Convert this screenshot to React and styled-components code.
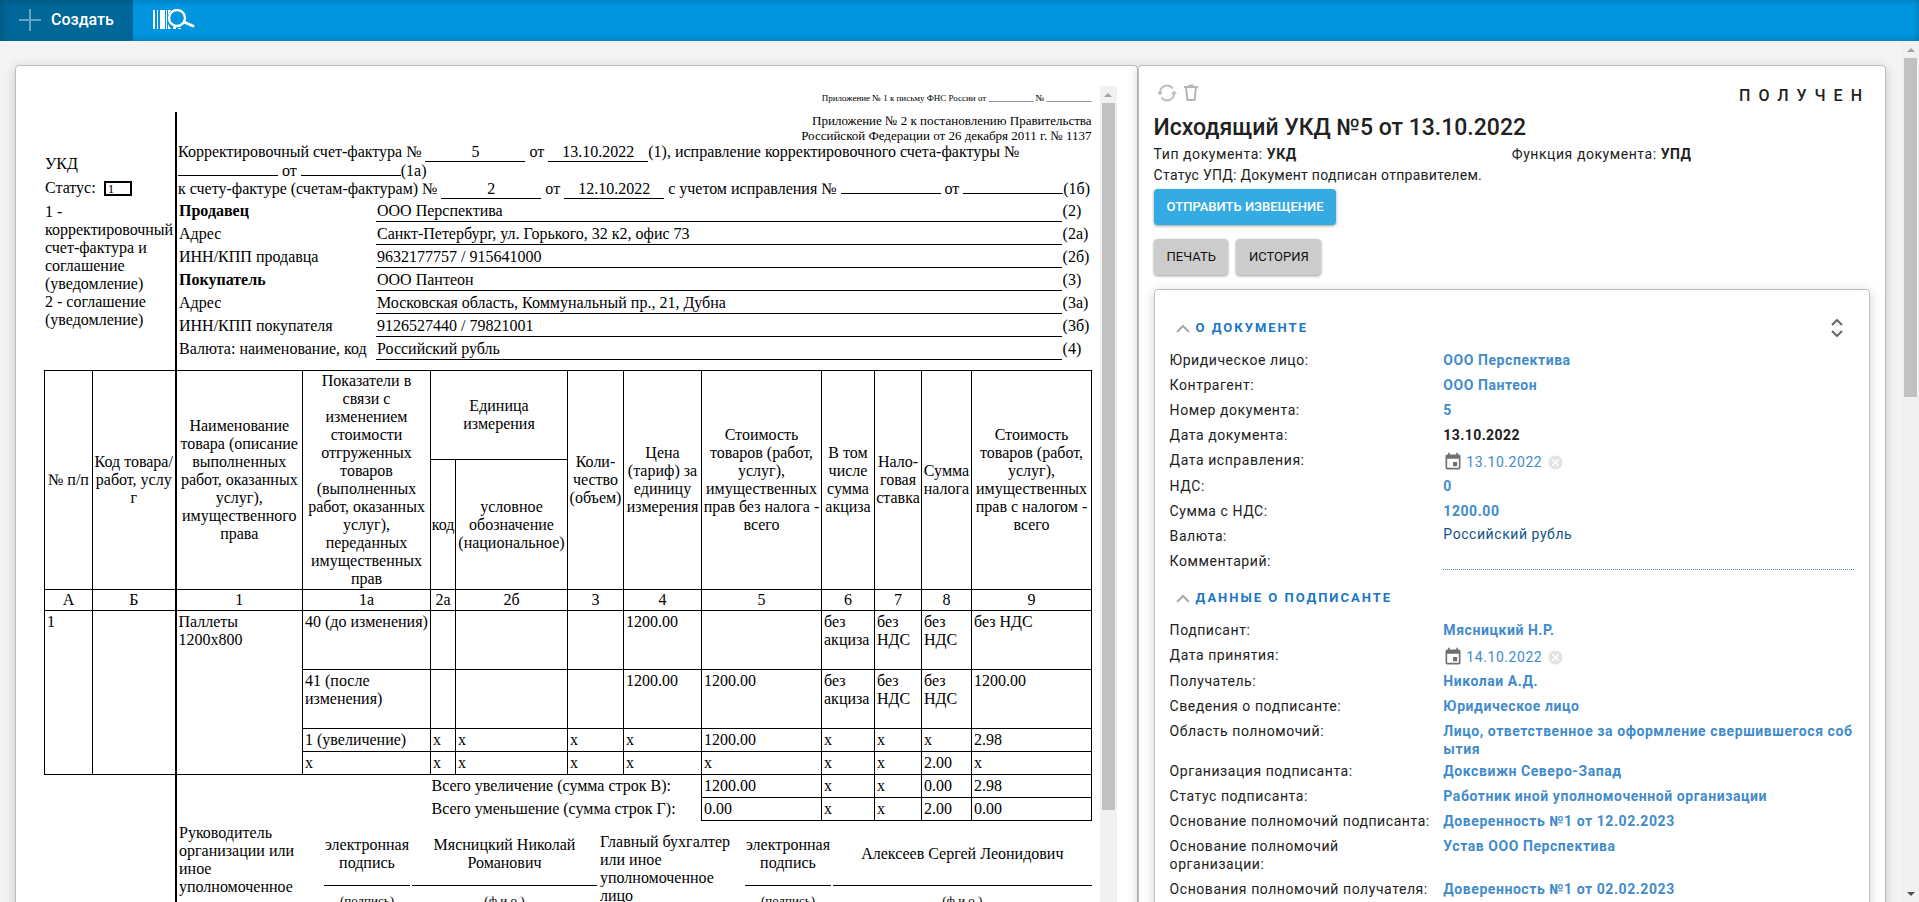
import React from 'react';
import styled, { createGlobalStyle } from 'styled-components';
import { MdEvent, MdCancel } from 'react-icons/md';

const columns = [48, 83, 127, 128, 25, 112, 56, 78, 120, 53, 47, 50, 120];

const indexes = ['А', 'Б', '1', '1а', '2а', '2б', '3', '4', '5', '6', '7', '8', '9'];

const requisites = [
  { label: 'Продавец', value: 'ООО Перспектива', code: '(2)', bold: true },
  { label: 'Адрес', value: 'Санкт-Петербург, ул. Горького, 32 к2, офис 73', code: '(2а)' },
  { label: 'ИНН/КПП продавца', value: '9632177757 / 915641000', code: '(2б)' },
  { label: 'Покупатель', value: 'ООО Пантеон', code: '(3)', bold: true },
  { label: 'Адрес', value: 'Московская область, Коммунальный пр., 21, Дубна', code: '(3а)' },
  { label: 'ИНН/КПП покупателя', value: '9126527440 / 79821001', code: '(3б)' },
  { label: 'Валюта: наименование, код', value: 'Российский рубль', code: '(4)' },
];

const rows = [
  ['40 (до изменения)', '', '', '', '1200.00', '', 'без\nакциза', 'без\nНДС', 'без\nНДС', 'без НДС'],
  ['41 (после\nизменения)', '', '', '', '1200.00', '1200.00', 'без\nакциза', 'без\nНДС', 'без\nНДС', '1200.00'],
  ['1 (увеличение)', 'х', 'х', 'х', 'х', '1200.00', 'х', 'х', 'х', '2.98'],
  ['х', 'х', 'х', 'х', 'х', 'х', 'х', 'х', '2.00', 'х'],
];

const totals = [
  { label: 'Всего увеличение (сумма строк В):', cells: ['1200.00', 'х', 'х', '0.00', '2.98'] },
  { label: 'Всего уменьшение (сумма строк Г):', cells: ['0.00', 'х', 'х', '2.00', '0.00'] },
];

const documentFields = [
  { label: 'Юридическое лицо:', value: 'ООО Перспектива' },
  { label: 'Контрагент:', value: 'ООО Пантеон' },
  { label: 'Номер документа:', value: '5' },
  { label: 'Дата документа:', value: '13.10.2022', type: 'text' },
  { label: 'Дата исправления:', value: '13.10.2022', type: 'date', id: 'fix-date' },
  { label: 'НДС:', value: '0' },
  { label: 'Сумма с НДС:', value: '1200.00' },
  { label: 'Валюта:', value: 'Российский рубль', type: 'select', id: 'currency' },
  { label: 'Комментарий:', value: '', type: 'input', id: 'comment' },
];

const signerFields = [
  { label: 'Подписант:', value: 'Мясницкий Н.Р.' },
  { label: 'Дата принятия:', value: '14.10.2022', type: 'date', id: 'accept-date' },
  { label: 'Получатель:', value: 'Николаи А.Д.' },
  { label: 'Сведения о подписанте:', value: 'Юридическое лицо' },
  { label: 'Область полномочий:', value: 'Лицо, ответственное за оформление свершившегося события' },
  { label: 'Организация подписанта:', value: 'Доксвижн Северо-Запад' },
  { label: 'Статус подписанта:', value: 'Работник иной уполномоченной организации' },
  { label: 'Основание полномочий подписанта:', value: 'Доверенность №1 от 12.02.2023' },
  { label: 'Основание полномочий организации:', value: 'Устав ООО Перспектива' },
  { label: 'Основания полномочий получателя:', value: 'Доверенность №1 от 02.02.2023' },
];

const PlusIcon = () => (
  <svg width="22" height="22" viewBox="0 0 22 22" stroke="#66a3c2" strokeWidth="2">
    <path d="M11 0v22M0 11h22" />
  </svg>
);

const BarcodeSearchIcon = () => (
  <svg width="42" height="22" viewBox="0 0 42 22" fill="none">
    <path fill="#fff" d="M0 1h2v19H0zM4 1h1v19H4zM7 1h5v19H7zM13 1h1v19h-1zM15 1h3l-3 5zM15 15l3 5h-3zM20 18h3v2h-3zM25 19h3v1h-3z" />
    <circle cx="24" cy="9" r="8" stroke="#fff" strokeWidth="2.4" />
    <path d="M31 13l9 4" stroke="#fff" strokeWidth="3" strokeLinecap="round" />
  </svg>
);

const RefreshIcon = () => (
  <svg width="20" height="18" viewBox="0 0 20 18" fill="none" stroke="#bdbdbd" strokeWidth="2">
    <path d="M3 8.5a7 7 0 0 1 12.6-4M17 9.5a7 7 0 0 1-12.6 4" />
    <path d="M0 8h6l-3 3.6zM14 10h6l-3-3.6z" fill="#bdbdbd" stroke="none" />
  </svg>
);

const TrashIcon = () => (
  <svg width="14" height="18" viewBox="0 0 14 18" fill="none" stroke="#b5b5b5" strokeWidth="2">
    <path d="M0 3h14M4.5 1.5h5M2 3l1.4 13h7.2L12 3" />
  </svg>
);

const ChevronUpIcon = () => (
  <svg width="14" height="9" viewBox="0 0 14 9" fill="none" stroke="#aaa" strokeWidth="2">
    <path d="M1 8l6-6 6 6" />
  </svg>
);

const UnfoldIcon = () => (
  <svg width="12" height="18" viewBox="0 0 12 18" fill="none" stroke="#666" strokeWidth="2">
    <path d="M1 6l5-5 5 5M1 12l5 5 5-5" />
  </svg>
);

const Scrollbar = ({ thumb, bottomArrow }) => (
  <Track aria-hidden="true">
    <ArrowBox><Arrow /></ArrowBox>
    <ThumbArea><Thumb $height={thumb} /></ThumbArea>
    {bottomArrow && <ArrowBox><Arrow $down /></ArrowBox>}
  </Track>
);

const FieldValue = ({ field }) => {
  if (field.type === 'text') return <PlainValue>{field.value}</PlainValue>;
  if (field.type === 'date') {
    return (
      <DateBox>
        <IconButton type="button" aria-label="Календарь"><MdEvent size={20} color="#707070" /></IconButton>
        <DateInput id={field.id} defaultValue={field.value} />
        <IconButton type="button" aria-label="Очистить"><MdCancel size={17} color="#e3e3e3" /></IconButton>
      </DateBox>
    );
  }
  if (field.type === 'select') {
    return (
      <Select id={field.id} defaultValue={field.value}>
        <option>{field.value}</option>
      </Select>
    );
  }
  if (field.type === 'input') return <CommentInput id={field.id} />;
  return <ValueLink href="#">{field.value}</ValueLink>;
};

const Section = ({ title, fields, action }) => (
  <SectionRoot>
    <SectionHeader>
      <SectionTitle>
        <SectionToggle type="button">
          <ChevronUpIcon />
          {title}
        </SectionToggle>
      </SectionTitle>
      {action}
    </SectionHeader>
    {fields.map((field) => (
      <Field key={field.label}>
        <FieldLabel as={field.id ? 'label' : 'span'} htmlFor={field.id}>{field.label}</FieldLabel>
        <FieldValue field={field} />
      </Field>
    ))}
  </SectionRoot>
);

const ItemsTable = () => (
  <Items>
    <colgroup>
      {columns.map((width, i) => <Col key={i} $width={width} />)}
    </colgroup>
    <thead>
      <UnitRow>
        <HeadCell rowSpan={2}>№ п/п</HeadCell>
        <HeadCell rowSpan={2}>{'Код товара/\nработ, услу\nг'}</HeadCell>
        <HeadCell rowSpan={2} $thick>{'Наименование\nтовара (описание\nвыполненных\nработ, оказанных\nуслуг),\nимущественного\nправа'}</HeadCell>
        <HeadCell rowSpan={2}>{'Показатели в\nсвязи с\nизменением\nстоимости\nотгруженных\nтоваров\n(выполненных\nработ, оказанных\nуслуг),\nпереданных\nимущественных\nправ'}</HeadCell>
        <HeadCell colSpan={2}>{'Единица\nизмерения'}</HeadCell>
        <HeadCell rowSpan={2}>{'Коли-\nчество\n(объем)'}</HeadCell>
        <HeadCell rowSpan={2}>{'Цена\n(тариф) за\nединицу\nизмерения'}</HeadCell>
        <HeadCell rowSpan={2}>{'Стоимость\nтоваров (работ,\nуслуг),\nимущественных\nправ без налога -\nвсего'}</HeadCell>
        <HeadCell rowSpan={2}>{'В том\nчисле\nсумма\nакциза'}</HeadCell>
        <HeadCell rowSpan={2}>{'Нало-\nговая\nставка'}</HeadCell>
        <HeadCell rowSpan={2}>{'Сумма\nналога'}</HeadCell>
        <HeadCell rowSpan={2}>{'Стоимость\nтоваров (работ,\nуслуг),\nимущественных\nправ с налогом -\nвсего'}</HeadCell>
      </UnitRow>
      <tr>
        <HeadCell>код</HeadCell>
        <HeadCell>{'условное\nобозначение\n(национальное)'}</HeadCell>
      </tr>
      <tr>
        {indexes.map((index, i) => <HeadCell key={index} $thick={i === 2}>{index}</HeadCell>)}
      </tr>
    </thead>
    <tbody>
      {rows.map((cells, i) => (
        <ItemRow key={i} $tall={i < 2}>
          {i === 0 && (
            <>
              <Cell rowSpan={4}>1</Cell>
              <Cell rowSpan={4} />
              <Cell rowSpan={4} $thick>{'Паллеты\n1200х800'}</Cell>
            </>
          )}
          {cells.map((cell, j) => <Cell key={j}>{cell}</Cell>)}
        </ItemRow>
      ))}
      {totals.map(({ label, cells }) => (
        <tr key={label}>
          <BlankCell colSpan={2} />
          <BlankCell colSpan={2} $thick />
          <BlankCell colSpan={4}>{label}</BlankCell>
          {cells.map((cell, j) => <Cell key={j}>{cell}</Cell>)}
        </tr>
      ))}
    </tbody>
  </Items>
);

const Invoice = () => (
  <Paper>
    <Letter>Приложение № 1 к письму ФНС России от __________ № __________</Letter>
    <Head>
      <Aside>
        <span>УКД</span>
        <Status>Статус: <StatusBox>1</StatusBox></Status>
        <span>1 - корректировочный счет-фактура и соглашение (уведомление)<br />2 - соглашение (уведомление)</span>
      </Aside>
      <Ruled>
        <Decree>
          Приложение № 2 к постановлению Правительства<br />
          Российской Федерации от 26 декабря 2011 г. № 1137
        </Decree>
        <Line>Корректировочный счет-фактура № <Blank>5</Blank> от <Blank>13.10.2022</Blank>(1), исправление корректировочного счета-фактуры №</Line>
        <Line><Blank /> от <Blank />(1а)</Line>
        <Line>к счету-фактуре (счетам-фактурам) № <Blank>2</Blank> от <Blank>12.10.2022</Blank> с учетом исправления № <Blank /> от <Blank />(1б)</Line>
        {requisites.map(({ label, value, code, bold }) => (
          <Requisite key={code}>
            <RequisiteLabel $bold={bold}>{label}</RequisiteLabel>
            <RequisiteValue>{value}</RequisiteValue>
            <RequisiteCode>{code}</RequisiteCode>
          </Requisite>
        ))}
      </Ruled>
    </Head>
    <ItemsTable />
    <Signatures>
      <SignRole>Руководитель организации или иное уполномоченное лицо</SignRole>
      <Sign>электронная подпись</Sign>
      <Sign>{'Мясницкий Николай\nРоманович'}</Sign>
      <SignRole>Главный бухгалтер или иное уполномоченное лицо</SignRole>
      <Sign>электронная подпись</Sign>
      <Sign>Алексеев Сергей Леонидович</Sign>
      <SignHint>(подпись)</SignHint>
      <SignHint>(ф.и.о.)</SignHint>
      <SignHint>(подпись)</SignHint>
      <SignHint>(ф.и.о.)</SignHint>
    </Signatures>
  </Paper>
);

const App = () => (
  <Page>
    <GlobalStyle />
    <TopBar>
      <CreateButton type="button"><PlusIcon />Создать</CreateButton>
      <SearchButton type="button" aria-label="Поиск по штрихкоду"><BarcodeSearchIcon /></SearchButton>
    </TopBar>
    <Body>
      <Content>
        <DocumentCard>
          <Invoice />
          <Scrollbar thumb="707px" />
        </DocumentCard>
        <InfoCard>
          <Toolbar>
            <IconButton type="button" aria-label="Обновить"><RefreshIcon /></IconButton>
            <IconButton type="button" aria-label="Удалить"><TrashIcon /></IconButton>
            <State>ПОЛУЧЕН</State>
          </Toolbar>
          <Title>Исходящий УКД №5 от 13.10.2022</Title>
          <Meta>
            <span>Тип документа: <b>УКД</b></span>
            <span>Функция документа: <b>УПД</b></span>
          </Meta>
          <StatusText>Статус УПД: Документ подписан отправителем.</StatusText>
          <Actions>
            <Button type="button" $primary>Отправить извещение</Button>
          </Actions>
          <Actions>
            <Button type="button">Печать</Button>
            <Button type="button">История</Button>
          </Actions>
          <Details>
            <Section
              title="О ДОКУМЕНТЕ"
              fields={documentFields}
              action={<IconButton type="button" aria-label="Развернуть"><UnfoldIcon /></IconButton>}
            />
            <Section title="ДАННЫЕ О ПОДПИСАНТЕ" fields={signerFields} />
          </Details>
        </InfoCard>
      </Content>
      <Scrollbar thumb="41%" bottomArrow />
    </Body>
  </Page>
);

const GlobalStyle = createGlobalStyle`
  * {
    box-sizing: border-box;
  }
  body {
    margin: 0;
    background: #f4f4f4;
    font-family: Roboto, "Liberation Sans", sans-serif;
    color: #212121;
  }
  button, input, select {
    font: inherit;
    letter-spacing: inherit;
    color: inherit;
  }
`;

const Page = styled.div`
  display: flex;
  flex-direction: column;
  height: 100vh;
  overflow: hidden;
`;

const TopBar = styled.header`
  display: flex;
  flex: none;
  height: 41px;
  background: #0095de;
  box-shadow: inset 0 0 6px rgba(0, 0, 0, 0.25);
`;

const CreateButton = styled.button`
  display: flex;
  align-items: center;
  gap: 10px;
  width: 133px;
  padding: 0 0 2px 19px;
  border: 0;
  background: #006799;
  box-shadow: inset 3px 2px 5px rgba(0, 0, 0, 0.15);
  color: #fff;
  font-size: 16px;
  font-weight: 500;
`;

const SearchButton = styled.button`
  display: flex;
  align-items: center;
  padding: 0 20px 2px;
  border: 0;
  background: none;
`;

const Body = styled.div`
  display: flex;
  flex: 1;
  min-height: 0;
`;

const Content = styled.main`
  display: grid;
  grid-template-columns: minmax(0, 3fr) minmax(0, 2fr);
  flex: 1;
  align-self: flex-start;
  min-width: 0;
  padding: 24px 16px 24px 15px;
`;

const Card = styled.div`
  border: 1px solid #bdbdbd;
  border-radius: 4px;
  background: #fff;
  box-shadow: 0 2px 12px rgba(0, 0, 0, 0.18);
`;

const DocumentCard = styled(Card)`
  display: flex;
  padding: 20px;
`;

const InfoCard = styled(Card)`
  padding: 15px;
  font-size: 14px;
  line-height: 18px;
  letter-spacing: 0.04em;
`;

const Track = styled.div`
  display: flex;
  flex-direction: column;
  flex: none;
  width: 17px;
  background: #f1f1f1;
`;

const ArrowBox = styled.span`
  display: flex;
  flex: none;
  align-items: center;
  justify-content: center;
  height: 17px;
`;

const Arrow = styled.i`
  border: 4px solid transparent;
  border-top: ${({ $down }) => $down ? '4px solid #505050' : '0'};
  border-bottom: ${({ $down }) => $down ? '0' : '4px solid #a3a3a3'};
`;

const ThumbArea = styled.div`
  flex: 1;
  padding: 0 2px;
`;

const Thumb = styled.div`
  height: ${({ $height }) => $height};
  background: #c1c1c1;
`;

const Paper = styled.article`
  flex: 1;
  min-width: 0;
  padding: 8px;
  font-family: "Liberation Serif", "Times New Roman", serif;
  font-size: 16px;
  line-height: 18px;
  color: #000;
`;

const Letter = styled.p`
  height: 18px;
  margin: 0;
  font-size: 9px;
  line-height: 9px;
  text-align: right;
`;

const Head = styled.div`
  display: flex;
`;

const Aside = styled.div`
  display: flex;
  flex-direction: column;
  gap: 6px;
  width: 131px;
  padding: 43px 0 0 1px;
`;

const Status = styled.div`
  display: flex;
  align-items: center;
  gap: 8px;
`;

const StatusBox = styled.span`
  width: 28px;
  height: 15px;
  padding-left: 2px;
  border: 2px solid #000;
  font-size: 13px;
  line-height: 11px;
`;

const Ruled = styled.div`
  flex: 1;
  min-width: 0;
  padding: 1px 0 10px 1px;
  border-left: 2px solid #000;
`;

const Decree = styled.p`
  margin: 0;
  font-size: 13px;
  line-height: 15px;
  text-align: right;
`;

const Line = styled.div`
  white-space: nowrap;
`;

const Blank = styled.span`
  display: inline-block;
  width: 100px;
  border-bottom: 1px solid #000;
  text-align: center;
`;

const Requisite = styled.div`
  display: grid;
  grid-template-columns: 198px 1fr 30px;
`;

const RequisiteLabel = styled.span`
  padding: 3px 0 2px 1px;
  font-weight: ${({ $bold }) => $bold ? 'bold' : 'normal'};
`;

const RequisiteValue = styled.span`
  padding: 3px 0 1px 1px;
  border-bottom: 1px solid #000;
`;

const RequisiteCode = styled.span`
  padding: 3px 0 2px 1px;
`;

const Items = styled.table`
  width: 100%;
  table-layout: fixed;
  border-collapse: collapse;
`;

const Col = styled.col`
  width: ${({ $width }) => $width}px;
`;

const UnitRow = styled.tr`
  height: 89px;
`;

const ItemRow = styled.tr`
  height: ${({ $tall }) => $tall ? 59 : 23}px;
`;

const Cell = styled.td`
  height: 23px;
  padding: 2px;
  border: 1px solid #000;
  border-left-width: ${({ $thick }) => $thick ? 2 : 1}px;
  vertical-align: top;
  white-space: pre;
`;

const HeadCell = styled.th`
  padding: 1px 0;
  border: 1px solid #000;
  border-left-width: ${({ $thick }) => $thick ? 2 : 1}px;
  font-weight: normal;
  text-align: center;
  white-space: pre;
`;

const BlankCell = styled.td`
  padding: 2px 1px;
  border-left: ${({ $thick }) => $thick ? '2px solid #000' : '0'};
`;

const Signatures = styled.div`
  display: grid;
  grid-template-columns: 144px 86px 185px 144px 86px 1fr;
  grid-template-rows: 63px 28px;
  column-gap: 2px;
  margin-left: 131px;
  padding: 2px 0 0 1px;
  border-left: 2px solid #000;
`;

const SignRole = styled.div`
  grid-row: span 2;
  align-self: center;
  padding-left: 1px;
`;

const Sign = styled.div`
  display: flex;
  align-items: center;
  justify-content: center;
  border-bottom: 1px solid #000;
  text-align: center;
  white-space: pre-line;
`;

const SignHint = styled.div`
  padding-top: 6px;
  font-size: 13px;
  text-align: center;
`;

const Toolbar = styled.div`
  display: flex;
  align-items: center;
  gap: 7px;
  height: 24px;
  padding-left: 3px;
`;

const IconButton = styled.button`
  display: flex;
  padding: 0;
  border: 0;
  background: none;
`;

const State = styled.span`
  margin-left: auto;
  padding-top: 5px;
  font-size: 16px;
  font-weight: 500;
  letter-spacing: 8px;
`;

const Title = styled.h1`
  margin: 8px 0 0;
  font-size: 23px;
  line-height: 30px;
  font-weight: 500;
  letter-spacing: 0;
`;

const Meta = styled.div`
  display: grid;
  grid-template-columns: 1fr 1fr;
  padding: 2px 0 3px;

  & b {
    font-weight: 700;
  }
`;

const StatusText = styled.p`
  margin: 0 0 5px;
  letter-spacing: 0.02em;
`;

const Actions = styled.div`
  display: flex;
  gap: 8px;
  margin-bottom: 14px;
`;

const Button = styled.button`
  height: 36px;
  padding: 0 12px 0 13px;
  border: 0;
  border-radius: 4px;
  background: ${({ $primary }) => $primary ? '#36abe3' : '#ccc'};
  box-shadow: 0 1px 3px rgba(0, 0, 0, 0.4);
  color: ${({ $primary }) => $primary ? '#fff' : '#111'};
  font-size: 13px;
  font-weight: ${({ $primary }) => $primary ? 500 : 400};
  letter-spacing: 0;
  text-transform: uppercase;
`;

const Details = styled(Card)`
  padding: 24px 15px;
`;

const SectionRoot = styled.section`
  & + & {
    margin-top: 11px;
  }
`;

const SectionHeader = styled.div`
  display: flex;
  align-items: center;
  justify-content: space-between;
  padding: 2px 11px 0 6px;
  margin-bottom: 7px;
`;

const SectionTitle = styled.h2`
  margin: 0;
  font-size: 13px;
  line-height: 24px;
  font-weight: 700;
  letter-spacing: 2px;
  color: #1976c8;
`;

const SectionToggle = styled.button`
  display: flex;
  align-items: center;
  gap: 6px;
  padding: 0;
  border: 0;
  background: none;
`;

const Field = styled.div`
  display: grid;
  grid-template-columns: 2fr 3fr;
  align-items: start;
`;

const FieldLabel = styled.span`
  padding: 4px 8px 3px 0;
`;

const PlainValue = styled.span`
  padding-top: 4px;
  font-weight: 700;
  letter-spacing: 0.03em;
`;

const ValueLink = styled.a`
  padding-top: 4px;
  color: #428bca;
  font-weight: 700;
  letter-spacing: 0.04em;
  text-decoration: none;
  word-break: break-all;
`;

const DateBox = styled.div`
  display: flex;
  align-items: center;
  height: 26px;
  padding-top: 4px;
`;

const DateInput = styled.input`
  width: 81px;
  height: 18px;
  margin-left: 3px;
  padding: 0;
  border: 0;
  background: none;
  color: #428bca;
`;

const Select = styled.select`
  appearance: none;
  justify-self: start;
  height: 21px;
  padding: 0;
  border: 0;
  background: none;
  color: #0f5485;
`;

const CommentInput = styled.input`
  width: 100%;
  height: 22px;
  padding: 0;
  border: 0;
  border-bottom: 1px dotted #428bca;
  background: none;
`;

export default App;
